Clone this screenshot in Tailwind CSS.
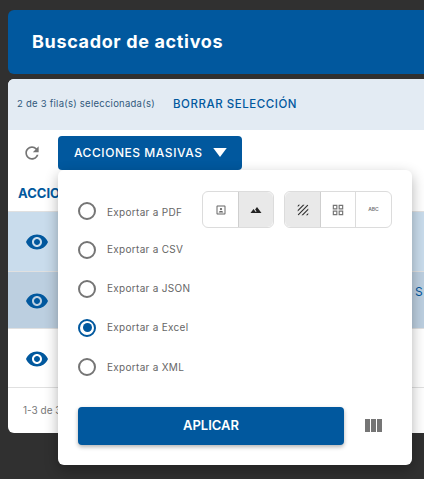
<!DOCTYPE html>
<html lang="es">
<head>
<meta charset="utf-8">
<title>Buscador de activos</title>
<script src="https://cdn.jsdelivr.net/npm/@tailwindcss/browser@4"></script>
</head>
<body class="relative h-[479px] w-[424px] overflow-hidden bg-[#303030] font-['Inter',sans-serif]">
  <!-- page header -->
  <div class="ml-2 mt-[10px] flex h-16 w-[432px] items-center rounded-md bg-[#01589e] pb-[1px] pl-6">
    <h1 class="text-[18px] font-bold tracking-[0.65px] text-white">Buscador de activos</h1>
  </div>

  <!-- table card -->
  <div class="ml-2 mt-[5px] h-[354px] w-[432px] overflow-hidden rounded-md bg-white">
    <div class="flex h-[51px] items-center bg-[#e3ebf3] pl-[9px]">
      <span class="w-[156px] text-[9.500px] tracking-[0.25px] text-[#31597c]">2 de 3 fila(s) seleccionada(s)</span>
      <span class="text-[11.500px] font-medium tracking-[0.55px] text-[#01589e]">BORRAR SELECCIÓN</span>
    </div>
    <div class="flex h-[47px] items-start pl-[14px] pt-[13px]">
      <svg class="h-5 w-5 fill-[#757575]" viewBox="0 0 24 24"><path d="M17.650 6.350C16.200 4.900 14.210 4 12 4c-4.420 0-7.990 3.580-7.990 8s3.570 8 7.990 8c3.730 0 6.840-2.550 7.730-6h-2.080c-.820 2.330-3.040 4-5.650 4-3.310 0-6-2.690-6-6s2.690-6 6-6c1.660 0 3.140.690 4.220 1.780L13 11h7V4l-2.350 2.350z"/></svg>
    </div>
    <div class="flex h-[35px] items-center border-b border-[#e0e0e0] pl-[10px] text-[13px] font-bold text-[#01589e]">ACCIONES</div>
    <div class="flex h-[60px] items-center border-b border-[#e0e0e0] bg-[#c9dcec] pl-[17px]">
      <svg class="h-6 w-6 fill-[#01589e]" viewBox="0 0 24 24"><path d="M12 4.500C7 4.500 2.730 7.610 1 12c1.730 4.390 6 7.500 11 7.500s9.270-3.110 11-7.500c-1.730-4.390-6-7.500-11-7.500zM12 17c-2.760 0-5-2.240-5-5s2.240-5 5-5 5 2.240 5 5-2.240 5-5 5zm0-8c-1.660 0-3 1.340-3 3s1.340 3 3 3 3-1.340 3-3-1.340-3-3-3z"/></svg>
    </div>
    <div class="flex h-[57px] items-center border-b border-[#e0e0e0] bg-[#bccfe0] pl-[17px] pt-[1px]">
      <svg class="h-6 w-6 fill-[#01589e]" viewBox="0 0 24 24"><path d="M12 4.500C7 4.500 2.730 7.610 1 12c1.730 4.390 6 7.500 11 7.500s9.270-3.110 11-7.500c-1.730-4.390-6-7.500-11-7.500zM12 17c-2.760 0-5-2.240-5-5s2.240-5 5-5 5 2.240 5 5-2.240 5-5 5zm0-8c-1.660 0-3 1.340-3 3s1.340 3 3 3 3-1.340 3-3-1.340-3-3-3z"/></svg>
      <span class="mb-[18px] ml-[366px] text-[12px] text-[#01589e]">S</span>
    </div>
    <div class="flex h-[59px] items-center border-b border-[#e0e0e0] pl-[17px] pt-[1px]">
      <svg class="h-6 w-6 fill-[#01589e]" viewBox="0 0 24 24"><path d="M12 4.500C7 4.500 2.730 7.610 1 12c1.730 4.390 6 7.500 11 7.500s9.270-3.110 11-7.500c-1.730-4.390-6-7.500-11-7.500zM12 17c-2.760 0-5-2.240-5-5s2.240-5 5-5 5 2.240 5 5-2.240 5-5 5zm0-8c-1.660 0-3 1.340-3 3s1.340 3 3 3 3-1.340 3-3-1.340-3-3-3z"/></svg>
    </div>
    <div class="flex h-[45px] items-center pl-[15px] text-[10px] text-[#777]">1-3 de 3</div>
  </div>

  <!-- bulk actions button -->
  <button class="absolute left-[58px] top-[136px] flex h-[34px] w-[184px] items-center rounded-[4px] bg-[#01589e] pl-4 text-[12px] font-medium tracking-[0.55px] text-white">
    ACCIONES MASIVAS
    <svg class="absolute left-[155px] top-[12px] h-[9px] w-[14px] fill-white" viewBox="0 0 15 10"><path d="M0 0h15L7.500 10z"/></svg>
  </button>

  <!-- export menu -->
  <div class="absolute left-[58px] top-[170px] h-[295px] w-[354px] rounded-md bg-white px-5 pt-[21px] shadow-[0_5px_14px_rgba(0,0,0,0.3)]">
    <div class="flex h-[39px] items-center">
      <span class="h-[18px] w-[18px] rounded-full border-2 border-[#757575]"></span>
      <span class="ml-[11px] mt-[4px] text-[10px] tracking-[0.3px] text-[#666]">Exportar a PDF</span>
      <div class="mb-[2px] ml-auto flex h-[37px]">
        <div class="mr-[10px] flex rounded-md border border-[#dcdcdc]">
          <span class="flex w-[35px] items-center justify-center">
            <svg class="h-3 w-3 fill-[#666]" viewBox="0 0 24 24"><path d="M12 12.250c1.240 0 2.250-1.010 2.250-2.250S13.240 7.750 12 7.750 9.750 8.760 9.750 10s1.010 2.250 2.250 2.250zm4.500 4c0-1.500-3-2.250-4.500-2.250s-4.500.750-4.500 2.250V17h9v-.750zM19 3H5c-1.100 0-2 .900-2 2v14c0 1.100.900 2 2 2h14c1.100 0 2-.900 2-2V5c0-1.100-.900-2-2-2zm0 16H5V5h14v14z"/></svg>
          </span>
          <span class="flex w-[35px] items-center justify-center rounded-r-md border-l border-[#cfcfcf] bg-[#e9e9e9]">
            <svg class="h-3 w-3 fill-[#222]" viewBox="0 0 24 24"><path d="M14 6l-3.750 5 2.850 3.800-1.600 1.200C9.810 13.750 7 10 7 10l-6 8h22L14 6z"/></svg>
          </span>
        </div>
        <div class="flex rounded-md border border-[#dcdcdc]">
          <span class="flex w-9 items-center justify-center rounded-l-md border-r border-[#cfcfcf] bg-[#e9e9e9]">
            <svg class="h-3.5 w-3.5 fill-[#333]" viewBox="0 0 24 24"><path d="M19.510 3.080L3.080 19.510c.090.340.270.650.510.900.250.240.560.420.900.510L20.930 4.490c-.190-.690-.730-1.230-1.420-1.410zM11.880 3L3 11.880v2.830L14.710 3h-2.830zM5 3c-1.100 0-2 .900-2 2v2l4-4H5zm14 18c.550 0 1.050-.220 1.410-.590.370-.360.590-.860.590-1.410v-2l-4 4h2zm-9.710 0h2.830L21 12.120V9.290L9.290 21z"/></svg>
          </span>
          <span class="flex w-[35px] items-center justify-center border-r border-[#dcdcdc]">
            <svg class="h-3.5 w-3.5 fill-[#757575]" viewBox="0 0 24 24"><path d="M3 3v8h8V3H3zm6 6H5V5h4v4zm-6 4v8h8v-8H3zm6 6H5v-4h4v4zm4-16v8h8V3h-8zm6 6h-4V5h4v4zm-6 4v8h8v-8h-8zm6 6h-4v-4h4v4z"/></svg>
          </span>
          <span class="flex w-[35px] items-center justify-center text-[5px] font-semibold text-[#777]">ABC</span>
        </div>
      </div>
    </div>
    <div class="flex h-[39px] items-center">
      <span class="h-[18px] w-[18px] rounded-full border-2 border-[#757575]"></span>
      <span class="ml-[11px] text-[10px] tracking-[0.3px] text-[#666]">Exportar a CSV</span>
    </div>
    <div class="flex h-[39px] items-center">
      <span class="h-[18px] w-[18px] rounded-full border-2 border-[#757575]"></span>
      <span class="ml-[11px] text-[10px] tracking-[0.3px] text-[#666]">Exportar a JSON</span>
    </div>
    <div class="flex h-[39px] items-center">
      <span class="flex h-[18px] w-[18px] items-center justify-center rounded-full border-2 border-[#01589e]">
        <span class="h-[9px] w-[9px] rounded-full bg-[#01589e]"></span>
      </span>
      <span class="ml-[11px] text-[10px] tracking-[0.3px] text-[#666]">Exportar a Excel</span>
    </div>
    <div class="flex h-[40px] items-center">
      <span class="h-[18px] w-[18px] rounded-full border-2 border-[#757575]"></span>
      <span class="ml-[11px] text-[10px] tracking-[0.3px] text-[#666]">Exportar a XML</span>
    </div>
    <div class="mt-[20px] flex items-center">
      <button class="h-[38px] w-[266px] rounded-[4px] bg-[#01589e] text-[13px] font-semibold text-white shadow-[0_2px_4px_rgba(0,0,0,0.3)]">APLICAR</button>
      <svg class="ml-[17px] h-6 w-6 fill-[#757575]" viewBox="0 0 24 24"><path d="M10 18h5V5h-5v13zm-6 0h5V5H4v13zM16 5v13h5V5h-5z"/></svg>
    </div>
  </div>
</body>
</html>
